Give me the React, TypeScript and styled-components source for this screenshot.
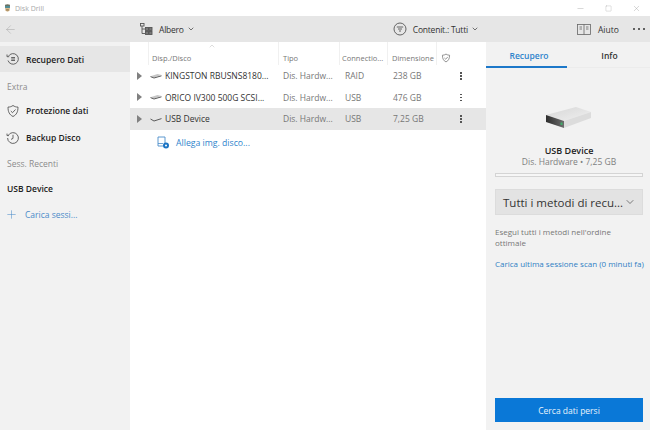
import styled, { createGlobalStyle } from "styled-components";
import { ArrowLeft, ChevronDown, ChevronUp, Minus, Plus, Square, X } from "lucide-react";

const GlobalStyle = createGlobalStyle`
  html, body {
    margin: 0;
    padding: 0;
    background: #fff;
  }
  body {
    font-family: "Open Sans", "Noto Sans", sans-serif;
    font-size: 9px;
    color: #1c1c1c;
  }
`;

const Window = styled.div`
  width: 650px;
  height: 430px;
  overflow: hidden;
  display: flex;
  flex-direction: column;
`;

const TitleBar = styled.div`
  height: 16px;
  display: flex;
  align-items: center;
  padding-left: 4px;
  gap: 4px;
  color: #a8a8a8;
  font-size: 7px;
`;

const WindowButtons = styled.div`
  margin-left: auto;
  display: flex;
  color: #9a9a9a;
`;

const WindowButton = styled.div`
  width: 28px;
  height: 16px;
  display: flex;
  align-items: center;
  justify-content: center;
`;

const Body = styled.div`
  flex: 1;
  min-height: 0;
  display: grid;
  grid-template-columns: 130px 356px 164px;
`;

const Column = styled.div<{ $tint?: boolean }>`
  display: flex;
  flex-direction: column;
  min-height: 0;
  background: ${({ $tint }) => ($tint ? "#f2f2f2" : "#fff")};
`;

const Toolbar = styled.div`
  height: 26px;
  flex: none;
  background: #e6e6e6;
  display: flex;
  align-items: center;
`;

const BackButton = styled.div`
  padding-left: 4px;
  display: flex;
  color: #a8a8a8;
`;

const ToolButton = styled.div<{ $indent?: number }>`
  display: flex;
  align-items: center;
  gap: 6px;
  margin-left: ${({ $indent }) => $indent ?? 0}px;
  color: #333;
  font-size: 8.5px;
  letter-spacing: -0.22px;
  white-space: nowrap;
`;

const ToolCaret = styled.span`
  display: flex;
  margin-left: -3px;
`;

const SideNav = styled.nav`
  display: flex;
  flex-direction: column;
  padding-top: 4px;
`;

const NavItem = styled.div<{ $active?: boolean; $height?: number }>`
  height: ${({ $height }) => $height ?? 27}px;
  display: flex;
  align-items: center;
  gap: 6px;
  padding-left: 6px;
  font-weight: 600;
  font-size: 8.5px;
  color: #222;
  background: ${({ $active }) => ($active ? "#e6e6e6" : "transparent")};
`;

const SectionLabel = styled.div<{ $push?: number }>`
  height: 25px;
  box-sizing: border-box;
  padding: ${({ $push }) => $push ?? 0}px 0 0 7px;
  display: flex;
  align-items: center;
  color: #8c8c8c;
  font-size: 8.5px;
`;

const SessionItem = styled.div`
  height: 24px;
  display: flex;
  align-items: center;
  padding-left: 7px;
  font-weight: 600;
  font-size: 8.5px;
  color: #222;
`;

const AddSession = styled.div`
  height: 28px;
  display: flex;
  align-items: center;
  gap: 7px;
  padding-left: 5px;
  color: #4b8bc9;
  font-size: 8.5px;
`;

const TableHead = styled.div`
  position: relative;
  height: 23px;
  display: grid;
  grid-template-columns: 18px 130px 61px 48px 49px 1fr;
  align-items: end;
`;

const SortCaret = styled.span`
  position: absolute;
  left: 78px;
  top: 0;
  display: flex;
  color: #a8a8a8;
`;

const HeadCell = styled.div<{ $divider?: boolean; $pad?: number }>`
  height: 100%;
  display: flex;
  align-items: flex-end;
  padding: 0 0 2px ${({ $pad }) => $pad ?? 3}px;
  box-sizing: border-box;
  color: #777;
  font-size: 7.5px;
  white-space: nowrap;
  overflow: hidden;
  border-left: ${({ $divider }) => ($divider ? "1px solid #f0f0f0" : "none")};
`;

const Row = styled.div<{ $selected?: boolean }>`
  height: 21.5px;
  display: grid;
  grid-template-columns: 20px 133px 60px 48px 47px 1fr;
  align-items: center;
  background: ${({ $selected }) => ($selected ? "#e6e6e6" : "transparent")};
`;

const Expander = styled.span`
  justify-self: start;
  margin-left: 7px;
  width: 0;
  height: 0;
  border-left: 5px solid #808080;
  border-top: 4px solid transparent;
  border-bottom: 4px solid transparent;
`;

const NameCell = styled.div`
  display: flex;
  align-items: center;
  gap: 3px;
  color: #333;
  font-size: 8.5px;
  white-space: nowrap;
`;

const Cell = styled.div<{ $indent?: number }>`
  color: #777;
  font-size: 8.5px;
  white-space: nowrap;
  padding-left: ${({ $indent }) => $indent ?? 0}px;
`;

const MoreCell = styled.div`
  display: flex;
  flex-direction: column;
  align-items: center;
  gap: 1.5px;
  width: 4px;
  margin-left: 21px;
  span {
    width: 1.5px;
    height: 1.5px;
    background: #555;
  }
`;

const AttachRow = styled.div`
  height: 26px;
  display: flex;
  align-items: center;
  gap: 6px;
  padding-left: 27px;
  color: #2f84cc;
  font-size: 8.7px;
`;

const HelpGroup = styled.div`
  margin-left: 91px;
  display: flex;
  align-items: center;
  gap: 7px;
  color: #333;
  font-size: 8.5px;
`;

const Dots = styled.div`
  margin-left: 14px;
  display: flex;
  gap: 2.5px;
  span {
    width: 2.5px;
    height: 2.5px;
    border-radius: 50%;
    background: #333;
  }
`;

const Tabs = styled.div`
  height: 26px;
  flex: none;
  display: grid;
  grid-template-columns: 81px 1fr;
  border-bottom: 1px solid #ececec;
  box-sizing: border-box;
`;

const Tab = styled.div<{ $active?: boolean }>`
  display: flex;
  align-items: center;
  justify-content: center;
  font-weight: 600;
  font-size: 8.5px;
  padding-top: 3px;
  color: ${({ $active }) => ($active ? "#2f84cc" : "#333")};
  border-bottom: 2px solid ${({ $active }) => ($active ? "#1d78c9" : "transparent")};
  margin-bottom: -1px;
  padding-left: ${({ $active }) => ($active ? 5 : 2)}px;
`;

const Panel = styled.div`
  flex: 1;
  min-height: 0;
  display: flex;
  flex-direction: column;
  padding: 36px 7px 8px 9px;
`;

const DriveArt = styled.div`
  align-self: center;
  display: flex;
`;

const DeviceName = styled.div`
  margin-top: 15px;
  text-align: center;
  font-weight: 600;
  font-size: 9px;
  line-height: 11px;
  color: #222;
`;

const DeviceMeta = styled.div`
  text-align: center;
  font-size: 8.5px;
  line-height: 11px;
  color: #808080;
`;

const Progress = styled.div`
  margin-top: 6px;
  height: 4px;
  box-sizing: border-box;
  border: 1px solid #d4d4d4;
  background: #f6f6f6;
`;

const Select = styled.div`
  margin-top: 12px;
  height: 26px;
  flex: none;
  display: flex;
  align-items: center;
  justify-content: space-between;
  padding: 0 6px 0 7px;
  background: #e3e3e3;
  border: 1px solid #dcdcdc;
  box-sizing: border-box;
  color: #333;
  font-size: 11.5px;
  white-space: nowrap;
`;

const Description = styled.p`
  margin: 11px 0 0;
  font-size: 8px;
  line-height: 11px;
  color: #777;
`;

const PanelLink = styled.div`
  margin-top: 10px;
  color: #2f7fc4;
  font-size: 8px;
  line-height: 11px;
  white-space: nowrap;
`;

const PrimaryButton = styled.div`
  margin-top: auto;
  height: 24px;
  flex: none;
  display: flex;
  align-items: center;
  justify-content: center;
  background: #0a78d7;
  color: #e8f3fc;
  font-size: 8.5px;
`;

const AppIcon = () => (
  <svg width="7" height="10" viewBox="0 0 10 12">
    <path d="M1.5 1.5 5 .5l3.5 1V5h-7z" fill="#6b6f5e" />
    <rect x="1.5" y="3" width="7" height="3" fill="#4f8c96" />
    <path d="M1.5 6h7L8 10l-3 1.5L2 10z" fill="#d6b98c" />
    <rect x="3" y="8" width="4" height="1.5" fill="#8c6d45" />
  </svg>
);

const DiskGlyph = ({ thin }: { thin?: boolean }) => (
  <svg width="12" height="6" viewBox="0 0 12 6">
    {!thin && <path d="M.5 3.2 7.5 1 11.5 2 4 4.4z" fill="#c6c6c6" />}
    <path
      d={thin ? "M.5 3 4 5 11.5 2.6" : "M.5 3.6 4 5 11.5 2.8"}
      fill="none"
      stroke="#5a5a5a"
      strokeWidth="1"
    />
  </svg>
);

const RecoverIcon = () => (
  <svg width="14" height="14" viewBox="0 0 14 14" fill="none" stroke="#555" strokeWidth="0.9">
    <path d="M2.5 4.2A5.3 5.3 0 1 1 2 8.5" />
    <path d="M1 2.5v2.2h2.2" />
    <path d="M5.2 5.5h3.8M5.2 7h3.8M5.2 8.5h3.8" />
  </svg>
);

const ShieldIcon = () => (
  <svg width="14" height="14" viewBox="0 0 14 14" fill="none" stroke="#555" strokeWidth="0.9">
    <path d="M7 1.5c1.5 1.1 3.2 1.6 5 1.6 0 4.6-1.3 7.6-5 9.4-3.7-1.8-5-4.8-5-9.4 1.8 0 3.5-.5 5-1.6z" />
    <path d="M4.8 7l1.7 1.7 3-3.2" />
  </svg>
);

const HistoryIcon = () => (
  <svg width="14" height="14" viewBox="0 0 14 14" fill="none" stroke="#555" strokeWidth="0.9">
    <path d="M2.4 4.2A5.4 5.4 0 1 1 1.6 7" />
    <path d="M1 2.6v2h2" />
    <path d="M7 3.8V7.4l-2 1" />
  </svg>
);

const TreeIcon = () => (
  <svg width="13" height="13" viewBox="0 0 13 13" fill="none" stroke="#555" strokeWidth="0.9">
    <rect x="0.5" y="0.5" width="3.5" height="2.5" />
    <path d="M2 3v7.5h3M2 6h3" />
    <rect x="5.5" y="4.5" width="3" height="3" fill="#777" />
    <rect x="9" y="4.5" width="3" height="3" fill="#777" />
    <rect x="5.5" y="8.5" width="3" height="3" fill="#777" />
    <rect x="9" y="8.5" width="3" height="3" fill="#777" />
  </svg>
);

const FilterIcon = () => (
  <svg width="14" height="14" viewBox="0 0 14 14" fill="none" stroke="#555" strokeWidth="0.9">
    <circle cx="7" cy="7" r="6" />
    <path d="M3.8 5h6.4M5 7h4M6 9h2" />
  </svg>
);

const BookIcon = () => (
  <svg width="14" height="11" viewBox="0 0 14 11" fill="none" stroke="#666" strokeWidth="0.8">
    <rect x="0.5" y="0.5" width="13" height="10" />
    <path d="M7 .5v10M2.5 3h2.5M2.5 5h2.5M9 3h2.5M9 5h2.5" />
  </svg>
);

const SmallShield = () => (
  <svg width="10" height="10" viewBox="0 0 14 14" fill="none" stroke="#777" strokeWidth="1.1">
    <path d="M7 1.5c1.5 1.1 3.2 1.6 5 1.6 0 4.6-1.3 7.6-5 9.4-3.7-1.8-5-4.8-5-9.4 1.8 0 3.5-.5 5-1.6z" />
    <path d="M4.8 7l1.7 1.7 3-3.2" />
  </svg>
);

const AttachIcon = () => (
  <svg width="13" height="13" viewBox="0 0 13 13">
    <path d="M1 1h7v7.5" fill="none" stroke="#4a8cc9" strokeWidth="0.9" />
    <path d="M1 1v9h5" fill="none" stroke="#4a8cc9" strokeWidth="0.9" />
    <path d="M1 7.5h5" stroke="#4a8cc9" strokeWidth="0.8" />
    <circle cx="9" cy="9.5" r="3" fill="#1b74c4" />
    <circle cx="9" cy="9.5" r="1" fill="#fff" />
  </svg>
);

const DriveIllustration = () => (
  <svg width="48" height="26" viewBox="0 0 48 26">
    <defs>
      <linearGradient id="drive-top" x1="0" y1="0" x2="1" y2="1">
        <stop offset="0" stopColor="#d6d6d6" />
        <stop offset="1" stopColor="#f0f0f0" />
      </linearGradient>
      <linearGradient id="drive-front" x1="0" y1="0" x2="1" y2="0">
        <stop offset="0" stopColor="#2e2e2e" />
        <stop offset="1" stopColor="#6e6e6e" />
      </linearGradient>
    </defs>
    <path d="M1 11 31 3 46 8 19 17z" fill="url(#drive-top)" />
    <path d="M19 17 46 8 46 14 19 24z" fill="#dcdcdc" />
    <path d="M1 11 19 17 19 24 1 18z" fill="url(#drive-front)" />
    <rect x="15.5" y="18.5" width="2" height="2.5" fill="#3fae6a" />
  </svg>
);

const rows = [
  { name: "KINGSTON RBUSNS8180...", conn: "RAID", size: "238 GB" },
  { name: "ORICO IV300 500G SCSI...", conn: "USB", size: "476 GB" },
  { name: "USB Device", conn: "USB", size: "7,25 GB", selected: true },
];

export default function App() {
  return (
    <Window>
      <GlobalStyle />
      <TitleBar>
        <AppIcon />
        Disk Drill
        <WindowButtons>
          <WindowButton><Minus size={9} strokeWidth={1} /></WindowButton>
          <WindowButton><Square size={7} strokeWidth={1} /></WindowButton>
          <WindowButton><X size={9} strokeWidth={1} /></WindowButton>
        </WindowButtons>
      </TitleBar>
      <Body>
        <Column $tint>
          <Toolbar>
            <BackButton><ArrowLeft size={13} strokeWidth={1} /></BackButton>
          </Toolbar>
          <SideNav>
            <NavItem $active $height={26}><RecoverIcon />Recupero Dati</NavItem>
            <SectionLabel $push={3}>Extra</SectionLabel>
            <NavItem><ShieldIcon />Protezione dati</NavItem>
            <NavItem><HistoryIcon />Backup Disco</NavItem>
            <SectionLabel>Sess. Recenti</SectionLabel>
            <SessionItem>USB Device</SessionItem>
            <AddSession><Plus size={13} strokeWidth={1} />Carica sessi...</AddSession>
          </SideNav>
        </Column>
        <Column>
          <Toolbar>
            <ToolButton $indent={10}>
              <TreeIcon />
              <span>Albero</span>
              <ToolCaret><ChevronDown size={8} /></ToolCaret>
            </ToolButton>
            <ToolButton $indent={198}>
              <FilterIcon />
              <span>Contenit.: Tutti</span>
              <ToolCaret><ChevronDown size={8} /></ToolCaret>
            </ToolButton>
          </Toolbar>
          <TableHead>
            <SortCaret><ChevronUp size={8} strokeWidth={1.2} /></SortCaret>
            <HeadCell />
            <HeadCell $divider>Disp./Disco</HeadCell>
            <HeadCell $divider $pad={4}>Tipo</HeadCell>
            <HeadCell $divider $pad={2}>Connectio...</HeadCell>
            <HeadCell $divider $pad={4}>Dimensione</HeadCell>
            <HeadCell $divider $pad={4}><SmallShield /></HeadCell>
          </TableHead>
          {rows.map((row) => (
            <Row key={row.name} $selected={row.selected}>
              <Expander />
              <NameCell>
                <DiskGlyph thin={row.selected} />
                {row.name}
              </NameCell>
              <Cell>Dis. Hardw...</Cell>
              <Cell $indent={2}>{row.conn}</Cell>
              <Cell $indent={2}>{row.size}</Cell>
              <MoreCell><span /><span /><span /></MoreCell>
            </Row>
          ))}
          <AttachRow>
            <AttachIcon />
            Allega img. disco...
          </AttachRow>
        </Column>
        <Column $tint>
          <Toolbar>
            <HelpGroup>
              <BookIcon />
              Aiuto
            </HelpGroup>
            <Dots><span /><span /><span /></Dots>
          </Toolbar>
          <Tabs>
            <Tab $active>Recupero</Tab>
            <Tab>Info</Tab>
          </Tabs>
          <Panel>
            <DriveArt><DriveIllustration /></DriveArt>
            <DeviceName>USB Device</DeviceName>
            <DeviceMeta>Dis. Hardware • 7,25 GB</DeviceMeta>
            <Progress />
            <Select>
              Tutti i metodi di recu...
              <ChevronDown size={12} strokeWidth={1.2} />
            </Select>
            <Description>Esegui tutti i metodi nell'ordine ottimale</Description>
            <PanelLink>Carica ultima sessione scan (0 minuti fa)</PanelLink>
            <PrimaryButton>Cerca dati persi</PrimaryButton>
          </Panel>
        </Column>
      </Body>
    </Window>
  );
}
